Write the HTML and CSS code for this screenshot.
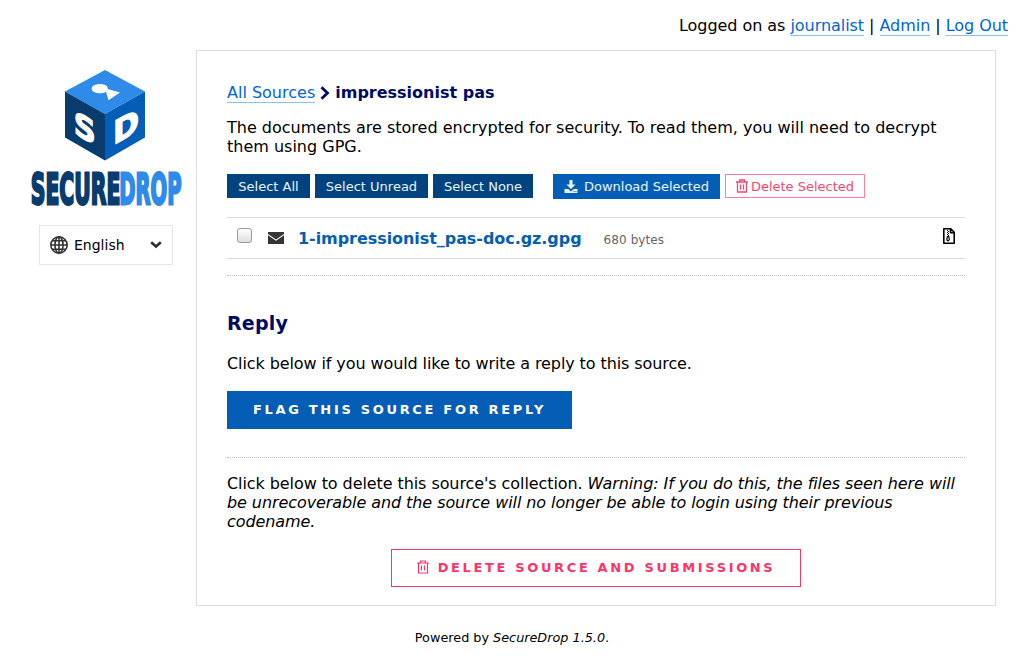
FILE: index.html
```html
<!DOCTYPE html>
<html lang="en">
<head>
<meta charset="utf-8">
<title>SecureDrop</title>
<link rel="stylesheet" href="styles.css">
</head>
<body>
<header class="session">Logged on as <a class="link" href="#">journalist</a> | <a class="link" href="#">Admin</a> | <a class="link" href="#">Log Out</a></header>
<div class="layout">
  <aside class="side">
    <svg class="logo" width="152" height="137" viewBox="0 0 152 137" role="img" aria-label="SecureDrop">
      <path fill="#2f8bea" d="M74 0 114 21.500 74 44 34 21.500z"/>
      <path fill="#093c6e" d="M34 21.500 74 44V90.500L34 67.500z"/>
      <path fill="#045eb5" d="M114 21.500 74 44V90.500L114 67.500z"/>
      <path fill="#fff" d="M75 21.800c-3 2-8.500 2-12 .2-3-1.800-3.200-4.600-.2-6.500 3.500-2 9-2 12.200 0 1.500 1 2 2.200 1.700 3.500L89 22.600 77.500 30.300z"/>
      <text class="cube-letter" transform="matrix(.9 .5 0 1 42.800 63.200)" textLength="24.500" lengthAdjust="spacingAndGlyphs">S</text>
      <text class="cube-letter" transform="matrix(.9 -.5 0 1 82 75.200)" textLength="29" lengthAdjust="spacingAndGlyphs">D</text>
      <text class="wordmark wordmark-dark" transform="translate(-.2 134) scale(.441 1)" textLength="203" lengthAdjust="spacingAndGlyphs">SECURE</text>
      <text class="wordmark wordmark-light" transform="translate(88.300 134) scale(.441 1)" textLength="141" lengthAdjust="spacingAndGlyphs">DROP</text>
    </svg>
    <div class="language">
      <svg width="20" height="20" viewBox="0 0 20 20" fill="none" stroke="#333" stroke-width="1.600"><circle cx="10" cy="10" r="8.200"/><ellipse cx="10" cy="10" rx="4" ry="8.200"/><path d="M10 2v16M2 10h16M3 5.800h14M3 14.200h14"/></svg>
      <span class="language-name">English</span>
      <svg width="12" height="8" viewBox="0 0 12 8" fill="none" stroke="#2d2d2d" stroke-width="2.600"><path d="M1.200 1.300 6 5.500l4.800-4.200"/></svg>
    </div>
  </aside>
  <main class="panel">
    <div class="crumbs"><a class="link" href="#">All Sources</a><svg class="crumb-arrow" width="10" height="14" viewBox="0 0 10 14" fill="none" stroke="#000a66" stroke-width="2.800"><path d="m1.500 1.200 6 5.800-6 5.800"/></svg><strong>impressionist pas</strong></div>
    <p class="intro">The documents are stored encrypted for security. To read them, you will need to decrypt them using GPG.</p>
    <div class="actions">
      <button class="small select-all">Select All</button>
      <button class="small select-unread">Select Unread</button>
      <button class="small select-none">Select None</button>
      <button class="small download"><svg width="14" height="14" viewBox="0 0 14 14" fill="currentColor"><path d="M5.500 0h3v4.500h3L7 9 2.500 4.500h3zM.500 9h3.700L7 11.500 9.800 9h3.700v4H.500z"/><path stroke="#045eb5" d="M9.500 11.600h1M11.500 11.600h1"/></svg>Download Selected</button>
      <button class="small delete"><svg width="12" height="14" viewBox="0 0 12 14" fill="none" stroke="currentColor" stroke-width="1.300"><path d="M0 3h12M3.500 3V1h5v2M1.500 3v10h9V3M4.500 5.500v5M7.500 5.500v5"/></svg>Delete Selected</button>
    </div>
    <div class="file">
      <span class="check"></span>
      <svg class="mail" width="16" height="12" viewBox="0 0 16 12"><path fill="#353535" d="M0 0h16v2L8 7.500 0 2zM0 3.300 8 8.800l8-5.500V12H0z"/></svg>
      <a class="file-name" href="#">1-impressionist_pas-doc.gz.gpg</a>
      <span class="size">680 bytes</span>
      <svg class="zip" width="12" height="16" viewBox="0 0 12 16" fill="none" stroke="#000" stroke-width="1.600"><path stroke-linejoin="round" d="M.8.800h7l3.400 3.400v11H.8zM7.500 1v3.700h3.700"/><path stroke-width="1" d="M4 2.500h1M5 3.500h1M4 4.500h1M5 5.500h1M4 6.500h1M5 7.500h1"/><path stroke-width="1.200" d="m4.500 8-.7 3.500c.4 1.700 2.200 1.700 2.500 0L5.600 8"/></svg>
    </div>
    <section class="reply">
      <h2>Reply</h2>
      <p class="reply-text">Click below if you would like to write a reply to this source.</p>
      <button class="large flag">Flag this source for reply</button>
    </section>
    <section class="removal">
      <p class="removal-text">Click below to delete this source's collection. <em>Warning: If you do this, the files seen here will be unrecoverable and the source will no longer be able to login using their previous codename.</em></p>
      <button class="large destroy"><svg width="12" height="14" viewBox="0 0 12 14" fill="none" stroke="currentColor" stroke-width="1.200"><path d="M0 3h12M3.500 3V1h5v2M1.500 3v10h9V3M4.500 5.500v5M7.500 5.500v5"/></svg>Delete source and submissions</button>
    </section>
  </main>
</div>
<footer class="footer">Powered by <em>SecureDrop 1.5.0</em>.</footer>
</body>
</html>
```
FILE: styles.css
```css
* { box-sizing: border-box; }
body { margin: 0; background: #fff; color: #000; font: 16px/19px "DejaVu Sans", sans-serif; overflow: hidden; }
p { margin: 0; }
svg { display: block; flex: none; }
.link { color: #0065db; text-decoration: none; border-bottom: 1px solid #8fc0f5; }
.session { height: 50px; padding: 16px 16px 0 0; text-align: right; letter-spacing: -.05px; }
.layout { display: flex; height: 556px; }
.side { width: 196px; padding: 20px 0 0 31px; flex: none; }
.logo { overflow: visible; }
.cube-letter { font: bold 32px "DejaVu Sans", sans-serif; fill: #fff; stroke: #fff; stroke-width: 1.200px; }
.wordmark { font: bold 42px "DejaVu Sans", sans-serif; stroke-width: 2.800px; }
.wordmark-dark { fill: #093c6e; stroke: #093c6e; }
.wordmark-light { fill: #2f8bea; stroke: #2f8bea; }
.language { display: flex; align-items: center; width: 134px; height: 40px; margin: 18px 0 0 8px; padding: 0 10px 0 9px; border: 1px solid #e5e5e5; font-size: 14px; }
.language-name { flex: 1; padding-left: 5px; }
.panel { width: 800px; height: 556px; padding: 32px 30px 0; border: 1px solid #ddd; }
.crumbs { display: flex; align-items: center; height: 19px; color: #000a66; }
.crumb-arrow { margin: 0 5px; }
.intro { margin-top: 16px; }
.actions { display: flex; align-items: flex-start; gap: 5px; margin-top: 18px; height: 25px; }
button { display: flex; align-items: center; justify-content: center; padding: 0; border: 0; border-radius: 0; font-family: "DejaVu Sans", sans-serif; }
.small { height: 24px; font-size: 13px; color: #e9f3fc; background: #00437f; white-space: nowrap; }
.select-all { width: 83px; }
.select-unread { width: 113px; }
.select-none { width: 100px; }
.small.download { width: 167px; height: 25px; margin-left: 15px; gap: 6px; background: #045eb5; }
.small.delete { width: 140px; gap: 3px; background: #fff; color: #f94570; border: 1px solid #ff7da0; }
.file { display: flex; align-items: center; width: 738px; height: 42px; margin-top: 18px; padding: 0 10px; border: solid #ddd; border-width: 1px 0; }
.check { width: 15px; height: 15px; margin-top: -5px; border: 1px solid #999; border-radius: 3px; background: linear-gradient(#fff, #dedede); }
.mail { margin-left: 16px; }
.file-name { margin-left: 14px; color: #045eb5; font-weight: bold; text-decoration: none; letter-spacing: -.06px; }
.size { margin: 4px 0 0 22px; color: #666; font-size: 12px; letter-spacing: .1px; }
.zip { margin: -4px 0 0 auto; }
.reply { width: 738px; height: 182px; margin-top: 16px; padding-top: 36px; border-top: 1px dotted #bbb; }
.reply h2 { margin: 0 0 20px; color: #000a66; font-size: 19px; line-height: 22px; letter-spacing: .2px; }
.reply-text { letter-spacing: -.095px; }
.large { height: 38px; padding-bottom: 2px; font-size: 13px; font-weight: bold; letter-spacing: 2.680px; text-transform: uppercase; white-space: nowrap; }
.flag { width: 345px; margin-top: 18px; color: #fff; background: #045eb5; }
.removal { width: 738px; padding-top: 16px; border-top: 1px dotted #bbb; }
.removal-text { letter-spacing: -.08px; }
.destroy { width: 410px; margin: 18px auto 0; gap: 9px; color: #ff3366; border: 1px solid #ff3366; background: #fff; letter-spacing: 2.640px; }
.footer { margin-top: 22px; text-align: center; font-size: 12.800px; }
```
